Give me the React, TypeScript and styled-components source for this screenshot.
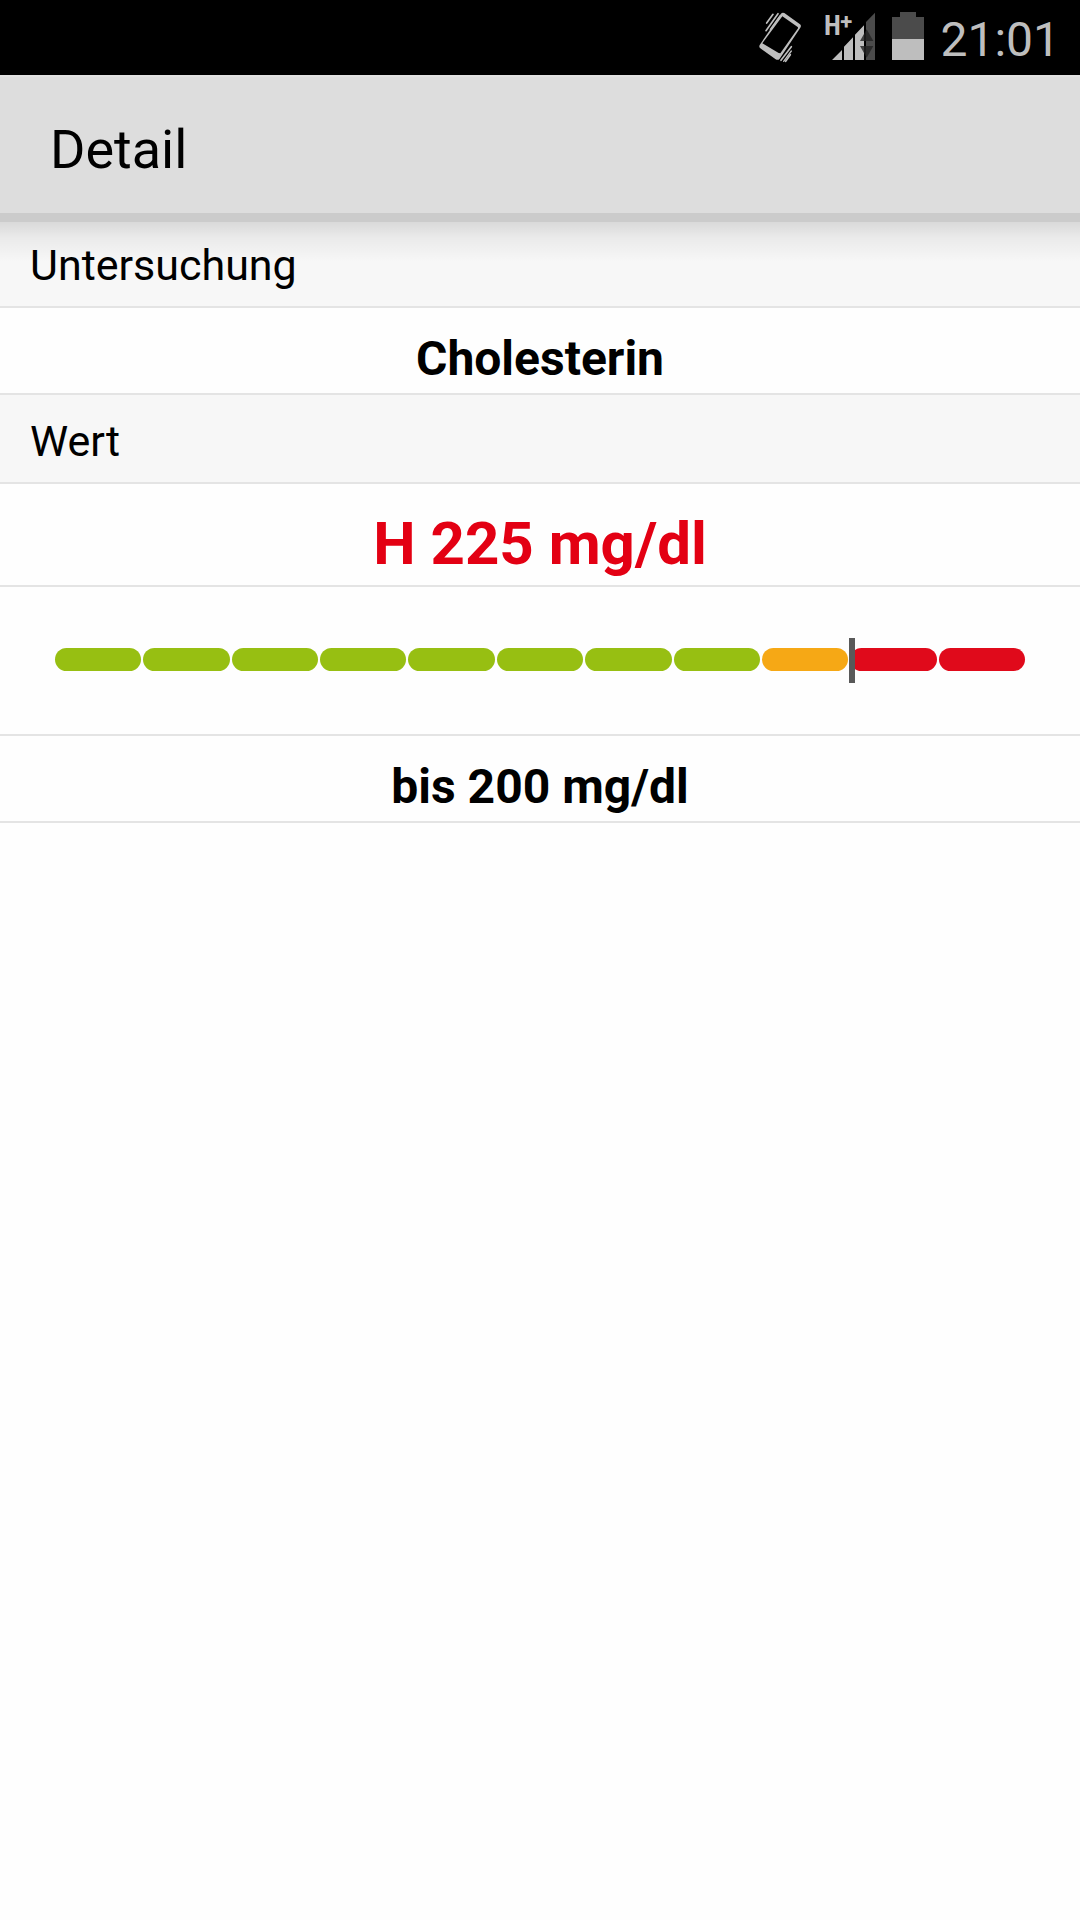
import React from "react";
import styled, { createGlobalStyle } from "styled-components";

const GlobalStyle = createGlobalStyle`
  *, *::before, *::after {
    box-sizing: border-box;
  }

  body {
    margin: 0;
    background: #fefefe;
    color: #000;
    font-family: Roboto, "Noto Sans", sans-serif;
  }
`;

const Screen = styled.div`
  display: flex;
  flex-direction: column;
  min-height: 100vh;
`;

const StatusBar = styled.div`
  display: flex;
  align-items: center;
  justify-content: flex-end;
  gap: 16px;
  height: 75px;
  padding: 0 20px;
  background: #000;
  color: #bebebe;
`;

const StatusIcon = styled.svg<{ $width: number }>`
  display: block;
  flex: none;
  width: ${(p) => p.$width}px;
  height: 75px;
`;

const VibrateSlot = styled.span`
  display: flex;
  margin-right: 6px;
`;

const Clock = styled.time`
  padding-top: 4px;
  font-size: 48px;
  line-height: 56px;
`;

const AppBar = styled.header`
  position: relative;
  z-index: 1;
  display: flex;
  align-items: center;
  height: 147px;
  padding: 10px 50px 0;
  border-top: 2px solid #e2e2e2;
  border-bottom: 9px solid #cbcbcb;
  background: #ddd;

  &::after {
    content: "";
    position: absolute;
    top: calc(100% + 9px);
    left: 0;
    right: 0;
    height: 40px;
    background: linear-gradient(rgba(0, 0, 0, 0.12), rgba(0, 0, 0, 0.05) 40%, transparent);
  }
`;

const Title = styled.h1`
  margin: 0;
  font-size: 54px;
  font-weight: 400;
  line-height: 64px;
`;

const Content = styled.main`
  margin-top: -3px;
`;

const SectionHeading = styled.h2`
  margin: 0;
  padding: 21px 30px 16px;
  border-bottom: 2px solid #e4e4e4;
  background: #f7f7f7;
  font-size: 43px;
  font-weight: 400;
  line-height: 50px;
`;

const TextRow = styled.p`
  margin: 0;
  padding: 23px 30px 6px;
  border-bottom: 2px solid #e4e4e4;
  font-size: 48px;
  font-weight: 700;
  line-height: 56px;
  text-align: center;
`;

const ResultRow = styled(TextRow)`
  padding: 25px 30px 6px;
  color: #e30013;
  font-size: 60px;
  line-height: 70px;
`;

const ScaleRow = styled.div`
  padding: 61px 55px 63px;
  border-bottom: 2px solid #e4e4e4;
`;

const Scale = styled.div`
  position: relative;
  display: flex;
  gap: 2px;
`;

const Segment = styled.span<{ $color: string }>`
  flex: 1;
  height: 23px;
  border-radius: 12px;
  background: ${(p) => p.$color};
`;

const Marker = styled.span`
  position: absolute;
  top: -10px;
  bottom: -12px;
  width: 6px;
  background: #595959;
`;

const GREEN = "#97bf12";
const ORANGE = "#f6a815";
const RED = "#e00a1b";

const SCALE_MAX = 275;
const SEGMENT_STEP = 25;
const NORMAL_LIMIT = 200;
const CRITICAL_LIMIT = 225;

const colorFor = (from: number) =>
  from < NORMAL_LIMIT ? GREEN : from < CRITICAL_LIMIT ? ORANGE : RED;

const segments = Array.from(
  { length: SCALE_MAX / SEGMENT_STEP },
  (_, i) => i * SEGMENT_STEP
);

function VibrateIcon() {
  return (
    <StatusIcon $width={42} viewBox="54 0 126 225" aria-label="Vibration">
      <path
        fill="#bebebe"
        fillRule="evenodd"
        d="M120 41Q124 36 130 39L177 73Q182 77 178 83L116 176Q111 182 104 178L58 145Q53 141 56 135ZM124 49L64 130L113 159L118 160L171 85Q172 82 169 80Z"
      />
      <path
        stroke="#bebebe"
        strokeWidth="5"
        strokeLinecap="round"
        fill="none"
        d="M96 43L77 69M111 41L75 92M151 140L120 181M148 164L134 184"
      />
      <path
        stroke="#bebebe"
        strokeWidth="4"
        strokeLinecap="round"
        fill="none"
        d="M118 46L88 88M151 153L128 184"
      />
    </StatusIcon>
  );
}

function SignalIcon() {
  return (
    <StatusIcon $width={53} viewBox="249 0 159 225" aria-label="Mobilfunk H+">
      <path fill="#bebebe" d="M276 180L306 150V180ZM312 180V140L339 112V180ZM345 180V104L372 76V180Z" />
      <path fill="#4b4b4b" d="M378 180V66L405 38V180Z" />
      <path fill="#222" fillOpacity="0.8" d="M360 123L380 88L400 123ZM360 138H400L380 173Z" />
      <text
        x="252"
        y="105"
        fill="#bebebe"
        fontFamily="'Liberation Sans Narrow', 'Roboto Condensed', Roboto, sans-serif"
        fontWeight="700"
        fontSize="82"
      >
        H
      </text>
      <text x="301" y="87" fill="#bebebe" fontFamily="Roboto, sans-serif" fontWeight="700" fontSize="66">
        +
      </text>
    </StatusIcon>
  );
}

function BatteryIcon() {
  return (
    <StatusIcon $width={32} viewBox="456 0 96 225" aria-label="Akku">
      <path fill="#4b4b4b" d="M480 36H528V51H552V117H456V51H480Z" />
      <path fill="#bebebe" d="M456 117H552V180H456Z" />
    </StatusIcon>
  );
}

export default function App() {
  const value = 225;

  return (
    <>
      <GlobalStyle />
      <Screen>
        <StatusBar>
          <VibrateSlot>
            <VibrateIcon />
          </VibrateSlot>
          <SignalIcon />
          <BatteryIcon />
          <Clock>21:01</Clock>
        </StatusBar>
        <AppBar>
          <Title>Detail</Title>
        </AppBar>
        <Content>
          <SectionHeading>Untersuchung</SectionHeading>
          <TextRow>Cholesterin</TextRow>
          <SectionHeading>Wert</SectionHeading>
          <ResultRow>H {value} mg/dl</ResultRow>
          <ScaleRow>
            <Scale
              role="meter"
              aria-label="Cholesterin"
              aria-valuemin={0}
              aria-valuemax={SCALE_MAX}
              aria-valuenow={value}
            >
              {segments.map((from) => (
                <Segment key={from} $color={colorFor(from)} />
              ))}
              <Marker style={{ left: `${(value / SCALE_MAX) * 100}%` }} />
            </Scale>
          </ScaleRow>
          <TextRow>bis {NORMAL_LIMIT} mg/dl</TextRow>
        </Content>
      </Screen>
    </>
  );
}
